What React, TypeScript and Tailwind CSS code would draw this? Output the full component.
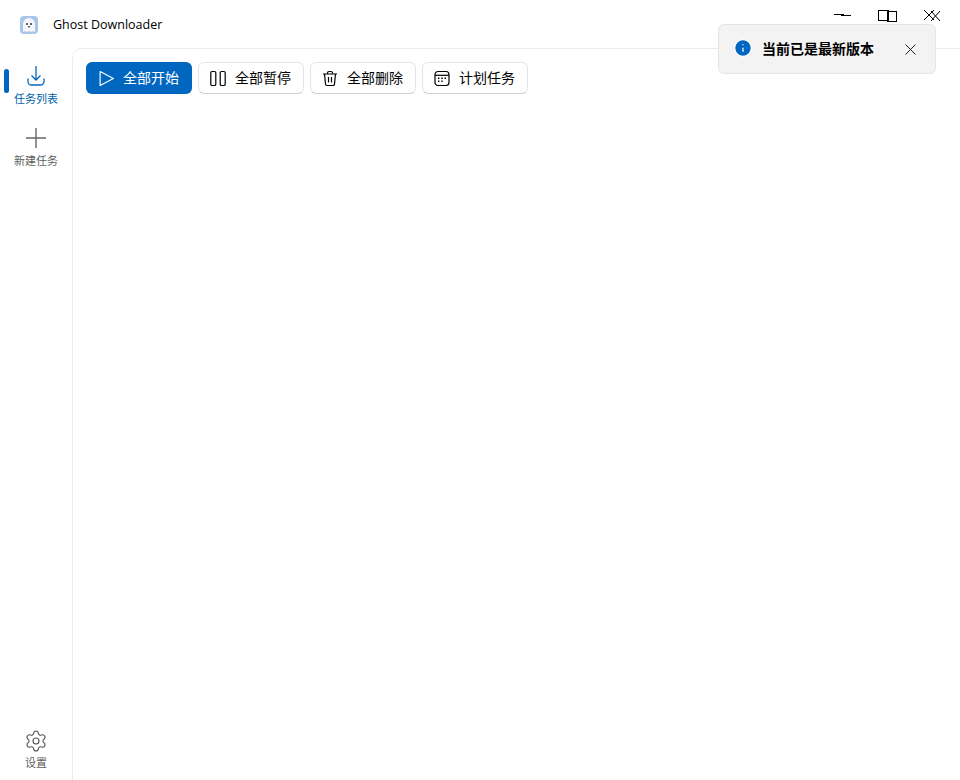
import { Info, Settings } from 'lucide-react'

const font = { fontFamily: '"Noto Sans CJK SC", sans-serif' }

function Ghost() {
  return (
    <svg width="18" height="18" viewBox="0 0 18 18">
      <rect width="18" height="18" rx="4" fill="#a9c6e8" />
      <path d="M3 16V8a6 6 0 0 1 12 0v8l-2-1-2 1-2-1-2 1-2-1z" fill="#f5f7fa" />
      <circle cx="7" cy="8" r="1" fill="#333" />
      <circle cx="11" cy="8" r="1" fill="#333" />
      <path d="M7.8 10.2h2.4a1.2 1.2 0 0 1-2.4 0z" fill="#333" />
    </svg>
  )
}

function WindowButtons() {
  return (
    <div className="flex items-center">
      <svg width="20" height="10" viewBox="0 0 20 10" className="mr-[25px]" stroke="#000" fill="none">
        <path d="M1 3.5h10M8 4.5h10" />
      </svg>
      <svg width="20" height="14" viewBox="0 0 20 14" className="mr-[25px]" stroke="#000" fill="none">
        <rect x="0.5" y="1.5" width="10" height="10" />
        <rect x="9.5" y="2.5" width="9" height="10" />
      </svg>
      <svg width="20" height="14" viewBox="0 0 20 14" className="mr-[17px]" stroke="#000" fill="none">
        <path d="M1 1l10 10M11 1L1 11M8 2l9 10M17 2l-9 10" />
      </svg>
    </div>
  )
}

function ToolButton({ icon, label }: { icon: React.ReactNode; label: string }) {
  return (
    <button className="flex h-8 w-[106px] items-center rounded-[6px] border border-[#e5e5e5] border-b-[#cfcfcf] bg-white pl-[11px] text-[14px] leading-[28px] text-black">
      <span className="flex w-4 justify-center">{icon}</span>
      <span className="ml-[9px] -mt-[2px]">{label}</span>
    </button>
  )
}

export default function App() {
  return (
    <div className="relative flex h-[780px] w-[960px] flex-col overflow-hidden bg-white" style={font}>
      <header className="flex h-[48px] shrink-0 items-start justify-between">
        <div className="flex items-center pl-5 pt-[15px]">
          <Ghost />
          <span className="ml-[15px] mt-[1px] text-[12.5px] leading-[18px] text-black" style={{ fontFamily: '"Open Sans", sans-serif' }}>
            Ghost Downloader
          </span>
        </div>
        <div className="pt-[9px]">
          <WindowButtons />
        </div>
      </header>

      <div className="flex min-h-0 flex-1">
        <nav className="flex w-[72px] shrink-0 flex-col items-center">
          <div className="relative flex h-[62px] w-full flex-col items-center pt-[17px] text-[#005fa8]">
            <span className="absolute left-1 top-[21px] h-6 w-[5px] rounded-full bg-[#0067c0]" />
            <svg width="20" height="22" viewBox="0 0 20 22" fill="none" stroke="#0067c0" strokeWidth="1.3">
              <path d="M10 1v14M5.5 10.5l4.5 4.5 4.5-4.5M2 13.5v3A3.5 3.5 0 0 0 5.5 20h9a3.5 3.5 0 0 0 3.5-3.5v-3" />
            </svg>
            <span className="mt-[3px] text-[11px] leading-4">任务列表</span>
          </div>
          <div className="flex h-[62px] w-full flex-col items-center pt-[18px] text-[#5f5f5f]">
            <svg width="20" height="20" viewBox="0 0 20 20" fill="none" stroke="#666" strokeWidth="1.4">
              <path d="M10 0v20M0 10h20" />
            </svg>
            <span className="mt-[4px] text-[11px] leading-4">新建任务</span>
          </div>
          <div className="mt-auto flex flex-col items-center pb-[10px] text-[#5f5f5f]">
            <Settings size={24} strokeWidth={1.1} color="#555" />
            <span className="mt-[1px] text-[11px] leading-4">设置</span>
          </div>
        </nav>

        <main className="flex-1 rounded-tl-[10px] border-l border-t border-[#ececec] bg-white pl-[13px] pt-[13px]">
          <div className="flex gap-[6px]">
            <button className="flex h-8 w-[106px] items-center rounded-[6px] bg-[#0067c0] pl-[12px] text-[14px] text-white">
              <svg width="17" height="17" viewBox="0 0 16 16" fill="none" stroke="#fff" strokeWidth="1.1" strokeLinejoin="round">
                <path d="M2 1.5v13L14.5 8z" />
              </svg>
              <span className="ml-[8px] -mt-[2px]">全部开始</span>
            </button>
            <ToolButton
              label="全部暂停"
              icon={
                <svg width="17" height="17" viewBox="0 0 16 16" fill="none" stroke="#000" strokeWidth="1.2">
                  <rect x="0.8" y="1" width="5" height="14" rx="1.3" />
                  <rect x="10.2" y="1" width="5" height="14" rx="1.3" />
                </svg>
              }
            />
            <ToolButton
              label="全部删除"
              icon={
                <svg width="17" height="17" viewBox="0 0 16 16" fill="none" stroke="#000" strokeWidth="1.2">
                  <path d="M1 3.5h14M5.5 3.5V2.5a1.5 1.5 0 0 1 1.5-1.5h2a1.5 1.5 0 0 1 1.5 1.5v1M2.5 3.5l1 10a1.5 1.5 0 0 0 1.5 1.5h6a1.5 1.5 0 0 0 1.5-1.5l1-10M6.5 6.5v5.5M9.5 6.5v5.5" />
                </svg>
              }
            />
            <ToolButton
              label="计划任务"
              icon={
                <svg width="17" height="17" viewBox="0 0 16 16" fill="none" stroke="#000" strokeWidth="1.2">
                  <rect x="1" y="1" width="14" height="14" rx="3" />
                  <path d="M1 4.8h14" />
                  <path d="M4 7.8h1.4M7.3 7.8h1.4M10.6 7.8h1.4M4 10.8h1.4M7.3 10.8h1.4" strokeWidth="1.6" />
                </svg>
              }
            />
          </div>
        </main>
      </div>

      <div className="absolute left-[718px] top-[24px] flex h-[50px] w-[218px] items-center rounded-[6px] border border-[#e5e5e5] bg-[#f3f3f3] pl-[14px]">
        <Info size={20} fill="#0067c0" stroke="#fff" strokeWidth={1.5} className="-mt-[2px]" />
        <span className="ml-[9px] -mt-[2px] text-[14px] font-bold text-black">当前已是最新版本</span>
        <svg width="11" height="11" viewBox="0 0 11 11" fill="none" stroke="#222" className="ml-[31px]">
          <path d="M0.5 0.5l10 10M10.5 0.5l-10 10" />
        </svg>
      </div>
    </div>
  )
}
